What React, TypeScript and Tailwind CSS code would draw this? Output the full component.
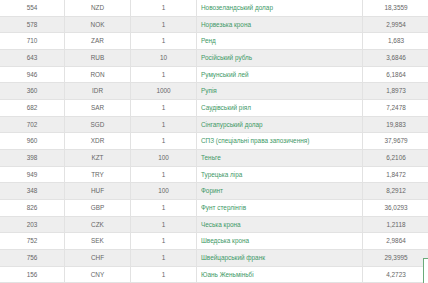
const rows = [
  { code: "554", letter: "NZD", units: "1", name: "Новозеландський долар", rate: "18,3559" },
  { code: "578", letter: "NOK", units: "1", name: "Норвезька крона", rate: "2,9954" },
  { code: "710", letter: "ZAR", units: "1", name: "Ренд", rate: "1,683" },
  { code: "643", letter: "RUB", units: "10", name: "Російський рубль", rate: "3,6846" },
  { code: "946", letter: "RON", units: "1", name: "Румунський лей", rate: "6,1864" },
  { code: "360", letter: "IDR", units: "1000", name: "Рупія", rate: "1,8973" },
  { code: "682", letter: "SAR", units: "1", name: "Саудівський ріял", rate: "7,2478" },
  { code: "702", letter: "SGD", units: "1", name: "Сінгапурський долар", rate: "19,883" },
  { code: "960", letter: "XDR", units: "1", name: "СПЗ (спеціальні права запозичення)", rate: "37,9679" },
  { code: "398", letter: "KZT", units: "100", name: "Теньге", rate: "6,2106" },
  { code: "949", letter: "TRY", units: "1", name: "Турецька ліра", rate: "1,8472" },
  { code: "348", letter: "HUF", units: "100", name: "Форинт", rate: "8,2912" },
  { code: "826", letter: "GBP", units: "1", name: "Фунт стерлінгів", rate: "36,0293" },
  { code: "203", letter: "CZK", units: "1", name: "Чеська крона", rate: "1,2118" },
  { code: "752", letter: "SEK", units: "1", name: "Шведська крона", rate: "2,9864" },
  { code: "756", letter: "CHF", units: "1", name: "Швейцарський франк", rate: "29,3995" },
  { code: "156", letter: "CNY", units: "1", name: "Юань Женьміньбі", rate: "4,2723" },
];

export default function App() {
  return (
    <div className="relative h-[283px] w-[428px] overflow-hidden bg-white font-['Liberation_Sans',Arial,sans-serif] text-[6.4px] text-[#666]">
      <div className="w-[440px]">
        {rows.map((r, i) => (
          <div
            key={r.code}
            className={`grid h-[16.66px] grid-cols-[65px_66px_66px_166px_66px] border-b border-[#e2e2e2] ${
              i % 2 === 1 ? "bg-[#eeeeee]" : "bg-white"
            }`}
          >
            <div className="flex items-center justify-center border-r border-[#e2e2e2]">{r.code}</div>
            <div className="flex items-center justify-center border-r border-[#e2e2e2]">{r.letter}</div>
            <div className="flex items-center justify-center border-r border-[#e2e2e2]">{r.units}</div>
            <div className="flex items-center border-r border-[#e2e2e2] pl-1 text-[#3d9966]">{r.name}</div>
            <div className="flex items-center justify-center">{r.rate}</div>
          </div>
        ))}
      </div>
      <div className="absolute left-[423px] top-[258px] h-[30px] w-[30px] border border-[#6aaa7a] bg-white" />
    </div>
  );
}
